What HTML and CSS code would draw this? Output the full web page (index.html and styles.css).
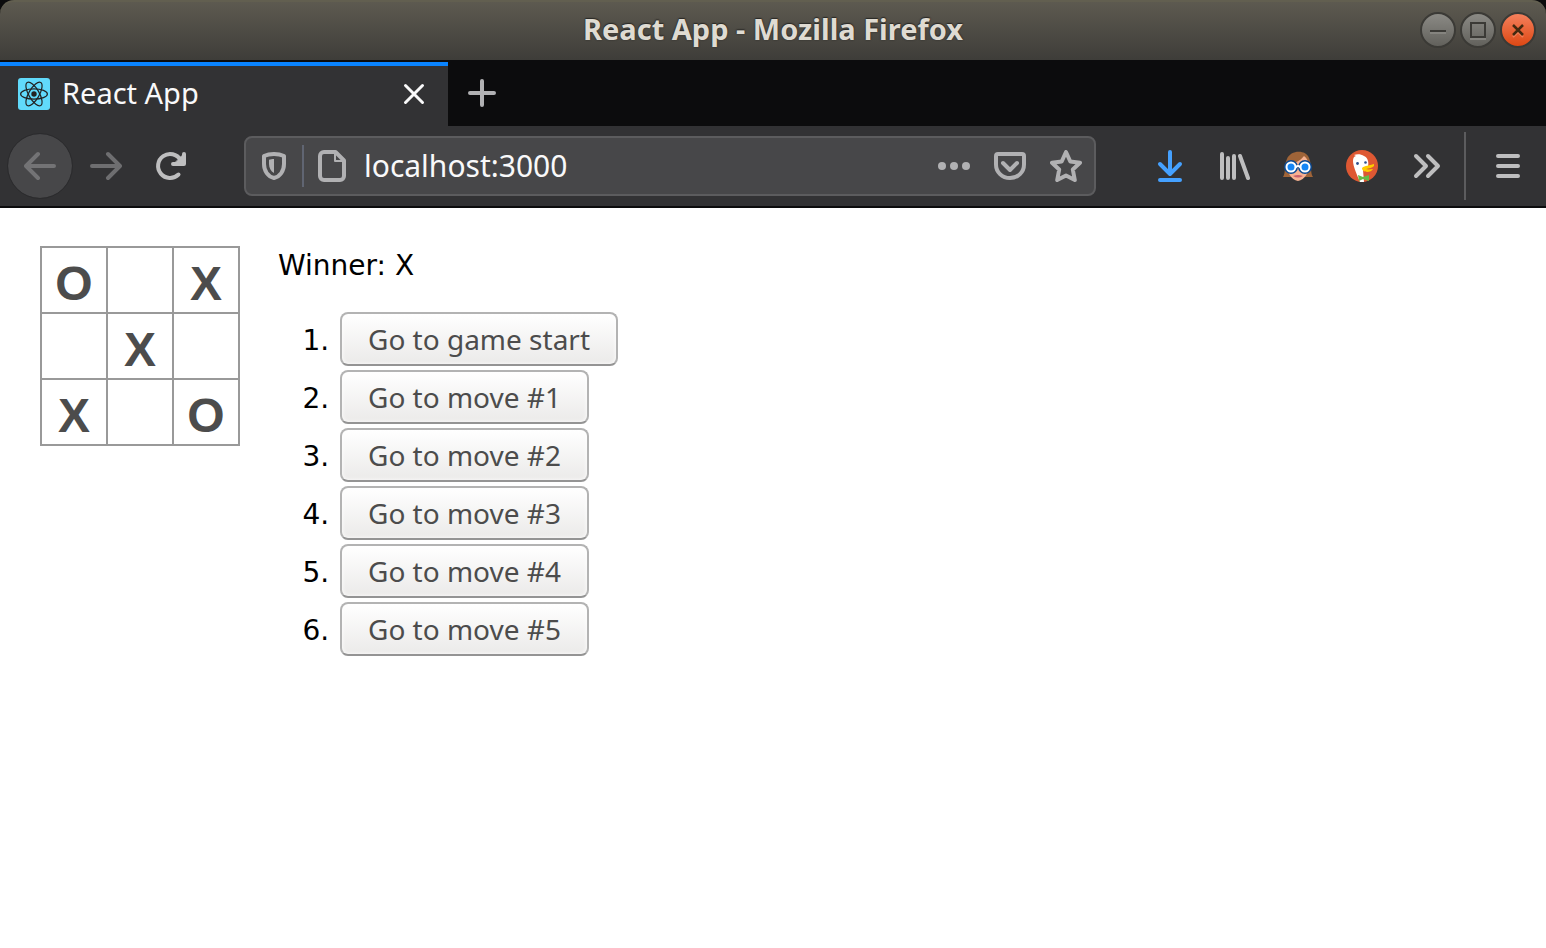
FILE: index.html
```html
<!DOCTYPE html>
<html lang="en">
<head>
<meta charset="utf-8">
<title>React App</title>
<link rel="stylesheet" href="styles.css">
</head>
<body>
<header class="browser">
  <div class="titlebar">
    <div class="window-title">React App - Mozilla Firefox</div>
    <div class="window-controls">
      <button class="window-button" aria-label="Minimize"><svg viewBox="0 0 36 36"><path class="control-shine" d="M10 21h16"/><path class="control-glyph" d="M10 19h16"/></svg></button>
      <button class="window-button" aria-label="Maximize"><svg viewBox="0 0 36 36"><path class="control-shine" d="M10 27h16"/><path class="control-glyph" d="M11 11h14v14H11z"/></svg></button>
      <button class="window-button window-close" aria-label="Close"><svg viewBox="0 0 36 36"><path class="close-shine" d="M13 25l5-5 5 5"/><path class="close-glyph" d="M13 13l10 10M23 13L13 23"/></svg></button>
    </div>
  </div>

  <div class="tabs">
    <div class="tab">
      <svg class="favicon" viewBox="0 0 32 32" aria-hidden="true">
        <rect width="32" height="32" rx="3" fill="#61dafb"/>
        <g fill="none" stroke="#222" stroke-width="1.2">
          <ellipse cx="16" cy="16" rx="13.4" ry="5.2"/>
          <ellipse cx="16" cy="16" rx="13.4" ry="5.2" transform="rotate(60 16 16)"/>
          <ellipse cx="16" cy="16" rx="13.4" ry="5.2" transform="rotate(120 16 16)"/>
        </g>
        <circle cx="16" cy="16" r="2.7" fill="#222"/>
      </svg>
      <span class="tab-title">React App</span>
      <button class="tab-close" aria-label="Close tab"><svg class="icon" viewBox="0 0 32 32"><path d="M7.500 7.500l17 17M24.500 7.500l-17 17" stroke-width="3"/></svg></button>
    </div>
    <button class="new-tab" aria-label="New tab"><svg class="icon" viewBox="0 0 32 32"><path d="M16 4v24M4 16h24"/></svg></button>
  </div>

  <nav class="toolbar" aria-label="Navigation">
    <button class="tool back" aria-label="Back"><svg class="icon" viewBox="0 0 32 32"><path d="M30 16H3M14 4L2 16l12 12"/></svg></button>
    <button class="tool forward" aria-label="Forward"><svg class="icon" viewBox="0 0 32 32"><path d="M2 16h27M18 4l12 12-12 12"/></svg></button>
    <button class="tool reload" aria-label="Reload"><svg class="icon" viewBox="0 0 32 32"><path d="M26.500 10A12 12 0 1 0 24.500 24.500"/><path d="M30 4v10H19"/><path d="M28 6v7h-7z" fill="currentColor" stroke-width="1"/></svg></button>

    <div class="urlbar">
      <button class="url-button" aria-label="Tracking protection"><svg class="icon" viewBox="0 0 32 32"><path d="M16 4c4 0 7 .6 10 2v8c0 7-4 12.500-10 14C10 26.500 6 21 6 14V6c3-1.400 6-2 10-2z"/><path d="M16 9c-2 0-3.500.2-5 .8V14c0 4 1.800 7.300 5 9z" fill="currentColor" stroke="none"/></svg></button>
      <span class="url-divider"></span>
      <button class="url-button" aria-label="Site information"><svg class="icon" viewBox="0 0 32 32"><path d="M8 2h11.500L28 10.500V26a4 4 0 0 1-4 4H8a4 4 0 0 1-4-4V6a4 4 0 0 1 4-4z"/><path d="M19 3v8h8" stroke-width="2"/></svg></button>
      <input class="url-input" type="text" value="localhost:3000" aria-label="Address" spellcheck="false">
      <button class="url-button" aria-label="Page actions"><svg class="icon" viewBox="0 0 32 32"><g fill="currentColor" stroke="none"><circle cx="4" cy="16" r="4"/><circle cx="16" cy="16" r="4"/><circle cx="28" cy="16" r="4"/></g></svg></button>
      <button class="url-button" aria-label="Save to Pocket"><svg class="icon" viewBox="0 0 32 32"><path d="M4 4h24a2 2 0 0 1 2 2v8.500C30 22 24 28 16 28S2 22 2 14.500V6a2 2 0 0 1 2-2z"/><path d="M9 13l7 7 7-7"/></svg></button>
      <button class="url-button" aria-label="Bookmark"><svg class="icon" viewBox="0 0 32 32"><path d="M16 2l4.300 9.500 9.700 1.200-7.200 6.800 2 10.500L16 25.500 7.200 30l2-10.500L2 12.700l9.700-1.200z"/></svg></button>
    </div>

    <button class="tool download" aria-label="Downloads"><svg class="icon" viewBox="0 0 32 32"><path d="M16 2v20M6 14l10 10 10-10M6 30h20"/></svg></button>
    <button class="tool" aria-label="Library"><svg class="icon" viewBox="0 0 32 32"><path d="M4 4v24M10 8v20M16 6v22M22 6l8 22"/></svg></button>
    <button class="tool" aria-label="Privacy extension"><svg class="icon" viewBox="0 0 32 32">
      <path d="M7 27H1c3-4 1-13 4-18C8 0 24-1 27 8c3 6 1 15 4 19h-6z" fill="#9f6438" stroke="none"/>
      <path d="M5 15c7-1 13-4 17-9 3 2 4 5 5 9 0 7-4 15-11 16C9 30 5 22 5 15z" fill="#f7b291" stroke="none"/>
      <path d="M11 26q5-2 10 0-5 3-10 0z" fill="#c8616c" stroke="none"/>
      <g fill="none" stroke="#0c4a92" stroke-width="6"><circle cx="9" cy="17" r="4"/><circle cx="23" cy="17" r="4"/></g>
      <g fill="#1686f5" stroke="#fff" stroke-width="2"><circle cx="9" cy="17" r="4.500"/><circle cx="23" cy="17" r="4.500"/><path d="M14 17q2-2 4 0" fill="none"/></g>
    </svg></button>
    <button class="tool" aria-label="DuckDuckGo"><svg class="icon" viewBox="0 0 32 32">
      <circle cx="16" cy="16" r="16" fill="#de5833" stroke="none"/>
      <path d="M14 32C11 25 7 16 7 11c0-3 1-4.500 3-5L8 5c3-1 7-1 10 1 4 2 5 6 4 11l-5 3 1 12z" fill="#fff" stroke="none"/>
      <circle cx="11.500" cy="13.500" r="1.400" fill="#2d4f8e" stroke="none"/><circle cx="19.500" cy="12.500" r="1.300" fill="#2d4f8e" stroke="none"/>
      <path d="M16 18c3-3 7-2 12-4v2c-2 2-5 2-8 3 3 1 5 0 7 0-2 4-11 4-11-1z" fill="#ffcc00" stroke="none"/>
      <path d="M12 25l5 2 6-2v6l-6-2-4 2z" fill="#65bc46" stroke="none"/>
    </svg></button>
    <button class="tool" aria-label="More tools"><svg class="icon" viewBox="0 0 32 32"><path d="M6 6l10 10L6 26M18 6l10 10-10 10"/></svg></button>
    <span class="toolbar-divider"></span>
    <button class="tool menu" aria-label="Menu"><svg class="icon" viewBox="0 0 32 32"><path d="M6 6h20M6 16h20M6 26h20"/></svg></button>
  </nav>
</header>

<main class="game">
  <div class="board">
    <button class="square">O</button><button class="square" aria-label="Empty"></button><button class="square">X</button>
    <button class="square" aria-label="Empty"></button><button class="square">X</button><button class="square" aria-label="Empty"></button>
    <button class="square">X</button><button class="square" aria-label="Empty"></button><button class="square">O</button>
  </div>
  <div class="game-info">
    <div class="status">Winner: X</div>
    <ol class="moves">
      <li><button class="move">Go to game start</button></li>
      <li><button class="move">Go to move #1</button></li>
      <li><button class="move">Go to move #2</button></li>
      <li><button class="move">Go to move #3</button></li>
      <li><button class="move">Go to move #4</button></li>
      <li><button class="move">Go to move #5</button></li>
    </ol>
  </div>
</main>
</body>
</html>
```
FILE: styles.css
```css
* { box-sizing: border-box; }

body {
  margin: 0;
  background: #fff;
  color: #000;
  font: 28px/40px "DejaVu Sans", sans-serif;
}

button, input {
  margin: 0;
  padding: 0;
  border: 0;
  background: none;
  color: inherit;
  font: inherit;
}

.browser {
  background: #0c0c0d;
  color: #f9f9fa;
  font-family: "Noto Sans", sans-serif;
}

.icon {
  display: block;
  width: 32px;
  height: 32px;
  fill: none;
  stroke: currentColor;
  stroke-width: 4;
  stroke-linecap: round;
  stroke-linejoin: round;
}

/* Window title bar */
.titlebar {
  display: grid;
  grid-template-columns: 1fr auto 1fr;
  align-items: center;
  height: 60px;
  padding: 0 10px 2px;
  border-top: 2px solid #625f50;
  border-radius: 14px 14px 0 0;
  background: linear-gradient(#5d5a50, #3e3d39);
}

.window-title {
  grid-column: 2;
  padding-bottom: 2px;
  color: #dfdbd2;
  font-size: 29px;
  font-weight: 700;
  text-shadow: 0 0 2px #2b2a27, 0 -1px 1px #2b2a27;
}

.window-controls {
  display: flex;
  justify-content: flex-end;
  gap: 4px;
}

.window-button {
  width: 36px;
  height: 36px;
  border: 2px solid #3b3a36;
  border-radius: 50%;
  background: linear-gradient(#8b8a85, #62615c);
}

.window-button svg {
  display: block;
  width: 36px;
  height: 36px;
  margin: -2px;
  fill: none;
  stroke-width: 2;
}

.window-close { background: linear-gradient(#f5805c, #dd4814); }
.control-glyph { stroke: #3b3a36; }
.control-shine { stroke: #85847f; }
.window-button .close-glyph { stroke: #44290f; stroke-width: 2.5; }
.close-shine { stroke: #f27e56; }

/* Tab strip */
.tabs {
  display: flex;
  height: 66px;
  padding-top: 2px;
}

.tab {
  display: flex;
  align-items: center;
  gap: 12px;
  width: 448px;
  padding: 0 18px 4px;
  border-top: 4px solid #0a84ff;
  background: #323234;
}

.favicon {
  width: 32px;
  height: 32px;
}

.tab-title {
  flex: 1;
  padding-bottom: 2px;
  font-size: 29px;
}

.new-tab {
  padding: 0 18px 2px;
  color: #b1b1b3;
}

/* Navigation toolbar */
.toolbar {
  display: flex;
  align-items: center;
  height: 82px;
  padding: 0 6px 0 8px;
  border-bottom: 2px solid #0c0c0d;
  background: #323234;
}

.tool {
  display: grid;
  place-items: center;
  flex: none;
  width: 64px;
  height: 64px;
  color: #bebebf;
}

.back {
  border-radius: 50%;
  outline: 1px solid #2b2b2d;
  background: #474749;
  color: #737375;
}

.forward {
  width: 68px;
  color: #6e6e70;
}

.reload { width: 60px; }
.download { color: #45a1ff; }
.menu { margin-left: 10px; }

.toolbar-divider {
  width: 2px;
  height: 68px;
  margin-left: 6px;
  background: #5c5c5e;
}

.urlbar {
  display: flex;
  flex: 1;
  align-items: center;
  height: 60px;
  margin: 0 42px 0 44px;
  border: 2px solid #5c5c5e;
  border-radius: 8px;
  background: #474749;
  color: #b1b1b3;
}

.url-button {
  display: grid;
  place-items: center;
  flex: none;
  width: 56px;
  height: 56px;
}

.url-divider {
  width: 2px;
  height: 42px;
  background: #606572;
}

.url-input {
  flex: 1;
  min-width: 0;
  height: 56px;
  padding: 0 0 2px 4px;
  color: #f9f9fa;
  font-size: 30px;
}

/* Game */
.game {
  display: flex;
  align-items: flex-start;
  gap: 38px;
  padding: 38px 40px;
}

.board {
  display: grid;
  grid-template-columns: repeat(3, 66px);
  grid-auto-rows: 66px;
  border: solid #999;
  border-width: 2px 0 0 2px;
}

.square {
  border: solid #999;
  border-width: 0 2px 2px 0;
  padding-top: 8px;
  color: #4c4c4c;
  font: 700 48px/56px "Liberation Sans", sans-serif;
}

.moves {
  display: grid;
  gap: 4px;
  margin: 26px 0 0;
  padding-left: 60px;
}

.moves li {
  padding-left: 2px;
  line-height: 54px;
}

.move {
  display: block;
  height: 54px;
  padding: 0 26px;
  border: 2px solid #b3b3b3;
  border-bottom-color: #949494;
  border-radius: 8px;
  background: linear-gradient(#fff, #ebeae9);
  box-shadow: inset 0 0 4px #fff;
  color: #4c4c4c;
  font: 28px/36px "Noto Sans", sans-serif;
}
```
